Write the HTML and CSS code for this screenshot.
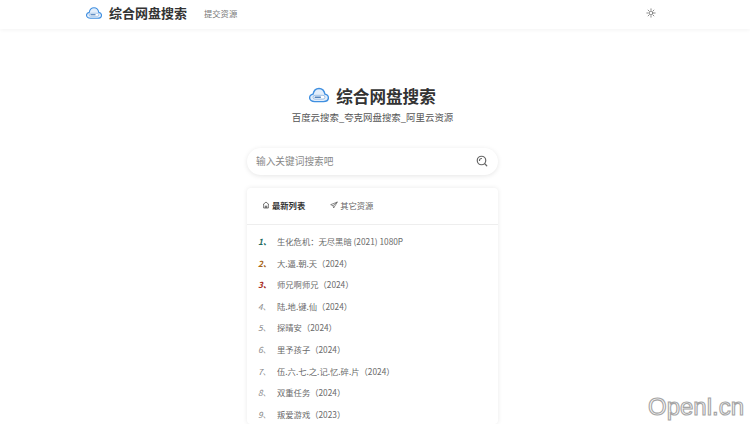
FILE: index.html
```html
<!DOCTYPE html>
<html lang="zh">
<head>
<meta charset="utf-8">
<title>综合网盘搜索</title>
<link rel="stylesheet" href="styles.css">
</head>
<body>
<svg class="defs" width="0" height="0" aria-hidden="true">
  <symbol id="cloud" viewBox="0 0 32 24">
    <path d="M9 22.500C4.200 22.500 1 20 1 16.500c0-3 2.200-5.200 5.500-5.800C7.500 5.500 11.200 1.500 16 1.500c4.800 0 8.500 4 9.500 9.200C28.800 11.300 31 13.500 31 16.500c0 3.500-3.200 6-8 6z" fill="#e3eefb" stroke="#3f8fe0" stroke-width="2.200"/>
    <rect x="6.500" y="12.500" width="19" height="6" rx="3" fill="#fff" stroke="#6a9bd4" stroke-width="1"/>
    <rect x="9" y="14.500" width="10" height="2" fill="#2f6ab0"/>
  </symbol>
</svg>
<header class="nav">
  <div class="brand">
    <svg class="brand-logo"><use href="#cloud"/></svg>
    <span class="brand-name">综合网盘搜索</span>
  </div>
  <a class="nav-link">提交资源</a>
  <svg class="sun" viewBox="0 0 24 24" fill="none" stroke="#666" stroke-width="1.800" stroke-linecap="round">
    <circle cx="12" cy="12" r="4.500"/>
    <path d="M12 2v3M12 19v3M2 12h3M19 12h3M5 5l2 2M17 17l2 2M5 19l2-2M17 7l2-2"/>
  </svg>
</header>
<main class="main">
  <div class="hero">
    <svg class="hero-logo"><use href="#cloud"/></svg>
    <h1 class="hero-title">综合网盘搜索</h1>
  </div>
  <p class="subtitle">百度云搜索_夸克网盘搜索_阿里云资源</p>
  <div class="search">
    <span class="placeholder">输入关键词搜索吧</span>
    <svg class="search-icon" viewBox="0 0 24 24" fill="none" stroke="#666" stroke-width="2.400" stroke-linecap="round">
      <circle cx="11" cy="11" r="8.500"/>
      <path d="M7 11a4 4 0 0 1 4-4M18 18l3.500 3.500"/>
    </svg>
  </div>
  <section class="card">
    <div class="tabs">
      <span class="tab tab-active">
        <svg class="tab-icon" viewBox="0 0 24 24" fill="none" stroke="#333" stroke-width="2" stroke-linejoin="round"><path d="M3 11l9-8 9 8M5 10v11h14V10M10 21v-6h4v6"/></svg>最新列表
      </span>
      <span class="tab">
        <svg class="tab-icon" viewBox="0 0 24 24" fill="none" stroke="#555" stroke-width="2" stroke-linejoin="round"><path d="M22 3L2 11l7 3 2 7zM9 14L22 3"/></svg>其它资源
      </span>
    </div>
    <ol class="list">
      <li class="row"><span class="rank rank-1">1、</span><span>生化危机：无尽黑暗 (2021) 1080P</span></li>
      <li class="row"><span class="rank rank-2">2、</span><span>大.逼.朝.天（2024）</span></li>
      <li class="row"><span class="rank rank-3">3、</span><span>师兄啊师兄（2024）</span></li>
      <li class="row"><span class="rank">4、</span><span>陆.地.键.仙（2024）</span></li>
      <li class="row"><span class="rank">5、</span><span>探晴安（2024）</span></li>
      <li class="row"><span class="rank">6、</span><span>里予孩子（2024）</span></li>
      <li class="row"><span class="rank">7、</span><span>伍.六.七.之.记.忆.碎.片（2024）</span></li>
      <li class="row"><span class="rank">8、</span><span>双重任务（2024）</span></li>
      <li class="row"><span class="rank">9、</span><span>叛爱游戏（2023）</span></li>
    </ol>
  </section>
</main>
<div class="watermark">Openl.cn</div>
</body>
</html>
```

FILE: styles.css
```css
* { box-sizing: border-box; }
html, body { margin: 0; height: 424px; overflow: hidden; }
body {
  position: relative;
  background: #fff;
  color: #555;
  font-family: "Noto Sans CJK SC", "Liberation Sans", sans-serif;
}
.defs { position: absolute; }
.nav {
  height: 29px;
  padding: 0 94px 3px 86px;
  display: flex;
  align-items: center;
  background: #fff;
  box-shadow: 0 1px 4px rgba(0, 0, 0, .05);
}
.brand { display: flex; align-items: center; gap: 7px; }
.brand-logo { width: 16px; height: 12px; }
.brand-name { font-size: 13px; font-weight: 700; color: #333; line-height: 26px; }
.nav-link { margin-left: 17px; font-size: 8.300px; color: #777; }
.sun { width: 10px; height: 10px; margin-left: auto; }
.main { width: 251px; margin-left: 247px; display: flex; flex-direction: column; }
.hero {
  margin-top: 55px;
  display: flex;
  justify-content: center;
  align-items: center;
  gap: 7px;
  height: 24px;
}
.hero-logo { width: 20px; height: 16px; margin-bottom: 2px; }
.hero-title { margin: 0; font-size: 16.600px; font-weight: 700; color: #333; }
.subtitle {
  margin: 0;
  height: 18px;
  line-height: 18px;
  text-align: center;
  font-size: 9.450px;
  color: #555;
  white-space: nowrap;
}
.search {
  margin-top: 22px;
  height: 27px;
  padding: 0 10px 2px 9px;
  display: flex;
  align-items: center;
  justify-content: space-between;
  border-radius: 14px;
  background: #fff;
  box-shadow: 0 1px 5px rgba(0, 0, 0, .1);
}
.placeholder { font-size: 9.700px; color: #888; }
.search-icon { width: 12px; height: 12px; }
.card {
  margin-top: 13px;
  border-radius: 4px;
  background: #fff;
  box-shadow: 0 0 5px rgba(0, 0, 0, .09);
}
.tabs {
  height: 37px;
  padding: 0 15px 2px;
  display: flex;
  align-items: center;
  gap: 25px;
  border-bottom: 1px solid #eee;
}
.tab { display: flex; align-items: center; gap: 2px; font-size: 8.300px; color: #666; }
.tab-active { font-weight: 700; color: #333; }
.tab-icon { width: 8px; height: 8px; }
.list { list-style: none; margin: 5.500px 0 0; padding: 0 11px; }
.row {
  height: 21.550px;
  display: flex;
  align-items: center;
  font-size: 8.300px;
  color: #6a6a6a;
  white-space: nowrap;
}
.rank { width: 19px; font-style: italic; color: #888; }
.rank-1 { color: #1f6b5f; font-weight: 700; }
.rank-2 { color: #a8661a; font-weight: 700; }
.rank-3 { color: #a82a20; font-weight: 700; }
.watermark {
  position: absolute;
  left: 648px;
  top: 392px;
  font-family: "Liberation Sans", sans-serif;
  font-size: 24px;
  line-height: 30px;
  color: #fff;
  -webkit-text-stroke: 1.100px #a5a5a5;
}
```
